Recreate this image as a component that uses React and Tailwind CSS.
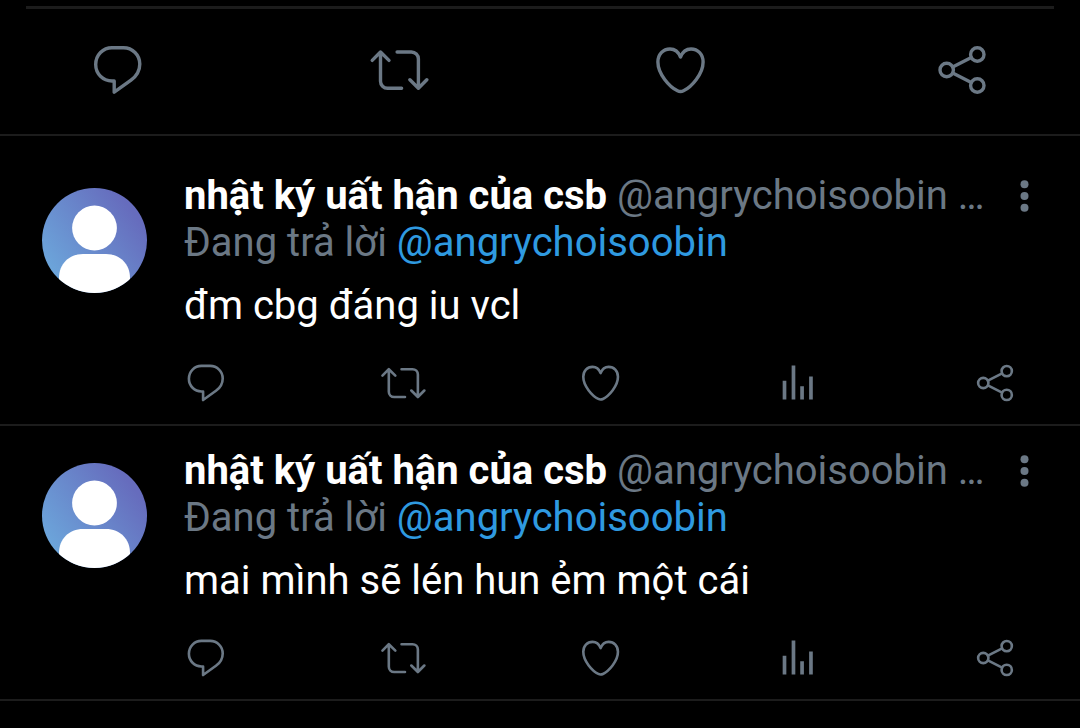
import React from "react";

function Icon({ className, children }) {
  return (
    <svg
      viewBox="0 0 60 60"
      className={className}
      fill="none"
      stroke="currentColor"
      strokeWidth="3.4"
      strokeLinecap="round"
      strokeLinejoin="round"
      aria-hidden="true"
    >
      {children}
    </svg>
  );
}

const shapes = {
  reply: (
    <path d="M24 7.7H35.5C44.5 7.7 51.8 15 51.8 24C51.8 31 48 36.5 43 40.2L26.2 52.2V41H24C15 40.7 7.7 34 7.7 24.5C7.7 15 15 7.7 24 7.7Z" />
  ),
  retweet: (
    <>
      <path d="M3.2 20.4L11.5 12L20 20.4M11.5 12.5V41.3a7 7 0 0 0 7 7H32.6" />
      <path d="M28.1 12H42.4a7 7 0 0 1 7 7V47.8M40.9 39.8L49.4 48.3L57.8 39.8" />
    </>
  ),
  like: (
    <path d="M29.5 17C27.5 12 23.5 9 19 9C12 9 6.9 14.5 6.9 22C6.9 34 18.5 47 26.5 50.8Q29.5 52.2 32.5 50.8C40.5 47 52.1 34 52.1 22C52.1 14.5 47 9 40 9C35.5 9 31.5 12 29.5 17Z" />
  ),
  stats: (
    <path
      stroke="none"
      fill="currentColor"
      d="M10 27h4.8v24.6h-4.8zM21.7 7.2h4.8v44.4h-4.8zM32.9 34.4h4.8v17.2h-4.8zM44.5 21.5h4.8v30.1H44.5z"
    />
  ),
  share: (
    <>
      <circle cx="14.7" cy="30" r="6.7" />
      <circle cx="45.3" cy="14.5" r="6.7" />
      <circle cx="45.3" cy="45.5" r="6.7" />
      <path d="M20.7 27L39.3 17.5M20.7 33L39.3 42.5" />
    </>
  ),
};

const labels = {
  reply: "Trả lời",
  retweet: "Tweet lại",
  like: "Thích",
  stats: "Thống kê",
  share: "Chia sẻ",
};

function Actions({ names, large, className }) {
  return (
    <div className={"flex items-center justify-between " + className}>
      {names.map((name) => (
        <button key={name} type="button" aria-label={labels[name]} className="block">
          <Icon className={large ? "block size-[60px]" : "block size-[46px]"}>{shapes[name]}</Icon>
        </button>
      ))}
    </div>
  );
}

function Avatar({ id }) {
  return (
    <svg viewBox="0 0 106 106" className="block size-[106px] shrink-0" role="img" aria-label="Ảnh đại diện">
      <defs>
        <linearGradient id={id + "-fill"} x1="0" y1="0.75" x2="0.8" y2="0.15">
          <stop offset="0" stopColor="#6ca8dc" />
          <stop offset="1" stopColor="#666cbd" />
        </linearGradient>
        <clipPath id={id + "-clip"}>
          <circle cx="52.5" cy="52.5" r="52.5" />
        </clipPath>
      </defs>
      <g clipPath={"url(#" + id + "-clip)"}>
        <rect width="106" height="106" fill={"url(#" + id + "-fill)"} />
        <circle cx="52.5" cy="40" r="22.4" fill="#fff" />
        <path d="M17 106V90C17 76 27 66 41 66H64C78 66 88 76 88 90V106Z" fill="#fff" />
      </g>
    </svg>
  );
}

function Tweet({ id, text, className }) {
  return (
    <article className={"flex gap-9 border-b-2 border-[#1c1c1c] pr-[62px] pl-[42px] " + className}>
      <div className="pt-4">
        <Avatar id={id} />
      </div>
      <div className="min-w-0 flex-1">
        <header className="-mr-6 flex items-center justify-between">
          <p className="truncate">
            <strong className="font-bold text-white">nhật ký uất hận của csb</strong> @angrychoisoobin …
          </p>
          <button type="button" aria-label="Thêm" className="block shrink-0">
            <svg viewBox="0 0 36 36" className="block size-9" fill="currentColor" aria-hidden="true">
              <circle cx="18.5" cy="6.3" r="4" />
              <circle cx="18.5" cy="18" r="4" />
              <circle cx="18.5" cy="29.7" r="4" />
            </svg>
          </button>
        </header>
        <p>
          Đang trả lời{" "}
          <a href="#angrychoisoobin" className="text-[#2f9ae0]">
            @angrychoisoobin
          </a>
        </p>
        <p className="mt-4 text-white">{text}</p>
        <Actions
          names={["reply", "retweet", "like", "stats", "share"]}
          className="mt-[31px] -ml-px"
        />
      </div>
    </article>
  );
}

export default function App() {
  return (
    <main className="min-h-screen bg-black font-['Roboto','Noto_Sans',sans-serif] text-[40px] leading-[47px] text-[#6b7885]">
      <section className="border-b-2 border-[#1c1c1c] pt-[6px] pb-[34px]">
        <hr className="mx-[26px] border-t-[3px] border-[#1c1c1c]" />
        <Actions large names={["reply", "retweet", "like", "share"]} className="mt-[31px] px-[88px]" />
      </section>
      <Tweet id="first" text="đm cbg đáng iu vcl" className="pt-9 pb-[18px]" />
      <Tweet id="second" text="mai mình sẽ lén hun ẻm một cái" className="pt-[21px] pb-[18px]" />
    </main>
  );
}
